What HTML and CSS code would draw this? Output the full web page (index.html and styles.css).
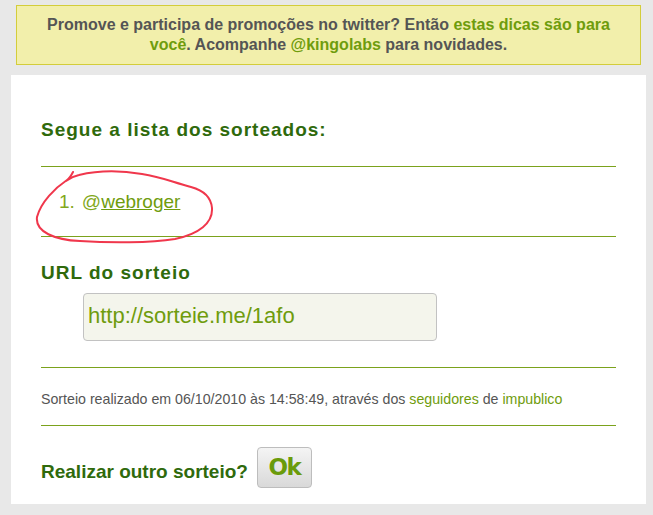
FILE: index.html
```html
<!DOCTYPE html>
<html lang="pt">
<head>
<meta charset="utf-8">
<title>Sorteie.me</title>
<link rel="stylesheet" href="styles.css">
</head>
<body>
<div class="banner">
  Promove e participa de promoções no twitter? Então <a href="#">estas dicas são para você</a>. Acompanhe <a href="#">@kingolabs</a> para novidades.
</div>
<div class="panel">
  <h2 class="title first">Segue a lista dos sorteados:</h2>
  <hr class="rule rule-a">
  <ol class="winners">
    <li>@<a href="#">webroger</a></li>
  </ol>
  <svg class="scribble" width="182" height="74" viewBox="34 170 182 74">
    <path d="M73,172 C71,176 70,178 67,180 C55,188 41,202 37,217 C35,232 55,240 80,241 C110,243 150,243 175,239 C199,234 213,223 212,208 C211,196 202,190 191,187 C172,182 162,177 142,174 C118,170 96,171 79,175 C74,176 70,178 66,181" fill="none" stroke="#f0374c" stroke-width="2" stroke-linecap="round" stroke-linejoin="round"/>
  </svg>
  <hr class="rule rule-b">
  <h2 class="title second">URL do sorteio</h2>
  <div class="url-box">http://sorteie.me/1afo</div>
  <hr class="rule rule-c">
  <p class="info">Sorteio realizado em 06/10/2010 às 14:58:49, através dos <a href="#">seguidores</a> de <a href="#">impublico</a></p>
  <hr class="rule rule-d">
  <div class="again">
    <span class="again-label">Realizar outro sorteio?</span>
    <button class="ok" type="button">Ok</button>
  </div>
</div>
</body>
</html>
```
FILE: styles.css
```css
html, body {
  margin: 0;
  padding: 0;
}
body {
  background: #e8e8e8;
  font-family: "Liberation Sans", Arial, sans-serif;
  width: 653px;
  height: 515px;
  overflow: hidden;
}
a {
  color: #6f9c0d;
  text-decoration: none;
}
.banner {
  margin: 5px 0 0 16px;
  width: 579px;
  height: 42px;
  padding: 9px 22px 7px;
  background: #f2efab;
  border: 1px solid #d3cd3b;
  color: #555555;
  font-size: 16px;
  font-weight: bold;
  line-height: 20px;
  text-align: center;
}
.panel {
  position: relative;
  margin: 10px 0 0 11px;
  width: 575px;
  height: 385px;
  padding: 44px 30px 0;
  background: #ffffff;
}
.title {
  margin: 0;
  font-size: 19px;
  line-height: 22px;
  font-weight: bold;
  letter-spacing: 1px;
  color: #2f6a0c;
}
.rule {
  margin: 0;
  border: 0;
  height: 1px;
  background: #7ba21c;
}
.rule-a { margin-top: 25px; }
.winners {
  margin: 24px 0 0;
  padding: 0 0 0 18px;
  list-style: none;
  font-size: 19px;
  line-height: 22px;
  color: #82a81c;
}
.winners li::before {
  content: "1.";
  margin-right: 7px;
}
.winners a {
  text-decoration: underline;
  color: #6f9c0d;
}
.scribble {
  position: absolute;
  left: 23px;
  top: 95px;
}
.rule-b { margin-top: 23px; }
.second { margin-top: 25px; }
.url-box {
  margin: 9px 0 0 42px;
  width: 348px;
  height: 44px;
  padding: 0 0 2px 4px;
  border: 1px solid #c2c2c2;
  border-radius: 4px;
  background: #f4f5ec;
  color: #6f9c0d;
  font-size: 22px;
  line-height: 44px;
}
.rule-c { margin-top: 26px; }
.info {
  margin: 23px 0 0;
  font-size: 14.2px;
  line-height: 16px;
  color: #555555;
}
.rule-d { margin-top: 18px; }
.again {
  margin-top: 21px;
  display: flex;
  align-items: flex-end;
  gap: 9px;
}
.again-label {
  font-size: 19px;
  line-height: 22px;
  font-weight: bold;
  color: #2f6a0c;
  margin-bottom: 5px;
}
.ok {
  width: 55px;
  height: 41px;
  padding: 0 0 2px;
  border: 1px solid #bdbdbd;
  border-radius: 4px;
  background: linear-gradient(#f4f4f4, #d9d9d9);
  font-family: "DejaVu Sans", Verdana, sans-serif;
  font-weight: bold;
  font-size: 23px;
  letter-spacing: -1.5px;
  color: #6a9b0b;
  cursor: pointer;
}
```
